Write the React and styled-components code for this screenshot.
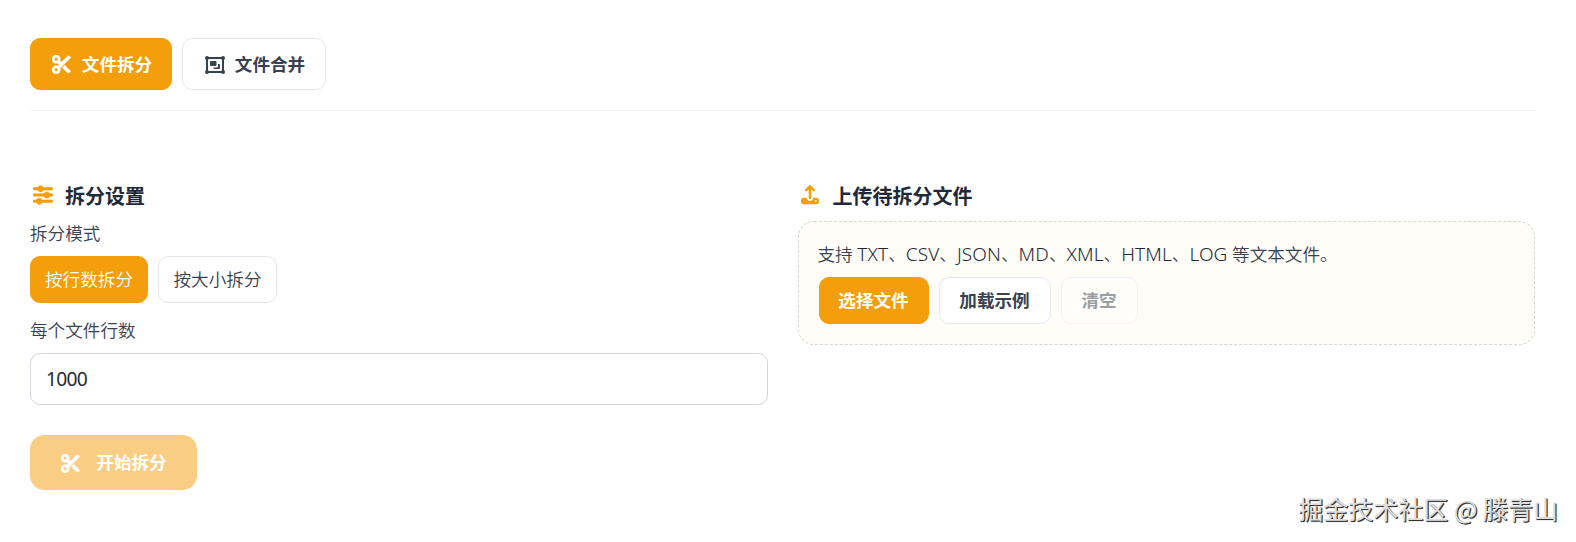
import React, { useState } from "react";
import styled, { createGlobalStyle } from "styled-components";
import { FaScissors } from "react-icons/fa6";

const GlobalStyle = createGlobalStyle`
  * {
    box-sizing: border-box;
  }

  body {
    margin: 0;
    background-color: #fff;
    color: #374151;
    font-family: "Noto Sans", "Noto Sans CJK SC", sans-serif;
    font-size: 17.6px;
  }

  button,
  input {
    font-family: inherit;
  }
`;

const Page = styled.main`
  position: relative;
  height: 542px;
  padding: 38px 41px 0 30px;
  overflow: hidden;
`;

const Tabs = styled.nav`
  display: flex;
  gap: 10px;
  height: 73px;
  border-bottom: 1px solid #f3f4f6;
`;

const Button = styled.button`
  display: inline-flex;
  align-items: center;
  justify-content: center;
  width: ${(props) => props.$width}px;
  height: ${(props) => props.$height || 47}px;
  padding: ${(props) => props.$top || 0}px 0 0 ${(props) => props.$top || 0}px;
  gap: ${(props) => props.$gap || 9}px;
  border: 1px solid ${(props) => (props.$active ? "#f59e0b" : "#e5e7eb")};
  border-radius: ${(props) => props.$radius || 10}px;
  background-color: ${(props) => (props.$active ? "#f59e0b" : "#fff")};
  color: ${(props) => (props.$active ? "#fff" : "#374151")};
  font-size: 17.6px;
  font-weight: ${(props) => props.$weight || 700};
  line-height: 1;
  white-space: nowrap;
  cursor: pointer;

  &:disabled {
    opacity: 0.5;
    cursor: not-allowed;
  }
`;

const IconBox = styled.span`
  display: inline-flex;
  justify-content: center;
  width: 1.25em;
  flex-shrink: 0;
`;

const ScissorsIcon = styled(FaScissors)`
  width: 19px;
  height: 19px;
  stroke: currentColor;
  stroke-width: 14px;
  flex-shrink: 0;
`;

const Columns = styled.div`
  display: grid;
  grid-template-columns: 1fr 1fr;
  gap: 30px;
  margin-top: 69px;
`;

const Title = styled.h3`
  display: flex;
  align-items: center;
  gap: 10px;
  height: 30px;
  margin: 0;
  color: #1f2937;
  font-size: 20px;
  font-weight: 700;

  ${IconBox} {
    color: #f59e0b;
  }
`;

const Label = styled.label`
  display: block;
  height: 28px;
  margin: ${(props) => props.$margin};
  color: #374151;
  font-weight: 350;
  line-height: 28px;
`;

const ButtonRow = styled.div`
  display: flex;
  gap: 10px;
`;

const Input = styled.input`
  display: block;
  width: 100%;
  height: 52px;
  margin-bottom: 30px;
  padding: 0 15px 2px;
  border: 1px solid #d1d5db;
  border-radius: 10px;
  outline: none;
  color: #1f2937;
  font-size: 19.2px;
  letter-spacing: -0.7px;
`;

const UploadBox = styled.div`
  height: 124px;
  margin-top: 11px;
  padding: 18px 20px;
  border: 1px dashed #d6d9d2;
  border-radius: 16px;
  background-color: #fffdf8;
`;

const Hint = styled.p`
  height: 28px;
  margin: 0 0 9px -1px;
  color: #374151;
  font-weight: 350;
  line-height: 28px;
  white-space: nowrap;
`;

const Format = styled.span`
  font-size: 19px;
  font-weight: 300;
  color: #1f2937;
  letter-spacing: 0.1px;
`;

const Watermark = styled.div`
  position: absolute;
  right: 18px;
  bottom: 16px;
  color: #dedede;
  font-family: "Noto Sans CJK SC", sans-serif;
  font-size: 25px;
  line-height: 36px;
  text-shadow: 1px 1px 0 #333, 1px 1px 1px #555;
  white-space: nowrap;
`;

const SlidersIcon = () => (
  <svg width="1em" height="1em" viewBox="0 0 512 512" fill="currentColor" stroke="currentColor" strokeWidth="14">
    <path d="M32 64C14.300 64 0 78.300 0 96s14.300 32 32 32h86.700c12.300 28.300 40.500 48 73.300 48s61-19.700 73.300-48H480c17.700 0 32-14.300 32-32s-14.300-32-32-32H265.300C253 35.700 224.800 16 192 16s-61 19.700-73.300 48zM32 224c-17.700 0-32 14.300-32 32s14.300 32 32 32h246.700c12.300 28.300 40.500 48 73.300 48s61-19.700 73.300-48H480c17.700 0 32-14.300 32-32s-14.300-32-32-32h-54.700c-12.300-28.300-40.500-48-73.300-48s-61 19.700-73.300 48zM32 384c-17.700 0-32 14.300-32 32s14.300 32 32 32h54.700c12.300 28.300 40.500 48 73.300 48s61-19.700 73.300-48H480c17.700 0 32-14.300 32-32s-14.300-32-32-32H233.300c-12.300-28.300-40.500-48-73.300-48s-61 19.700-73.300 48z" />
  </svg>
);

const UploadIcon = () => (
  <svg width="0.9em" height="1.03em" viewBox="0 0 448 512" fill="currentColor">
    <path d="M256 109.300V320c0 17.700-14.300 32-32 32s-32-14.300-32-32V109.300l-41.400 41.400c-12.500 12.500-32.800 12.500-45.300 0s-12.500-32.800 0-45.300l96-96c12.500-12.500 32.800-12.500 45.300 0l96 96c12.500 12.500 12.500 32.800 0 45.300s-32.800 12.500-45.300 0zM224 400c44.200 0 80-35.800 80-80h80c35.300 0 64 28.700 64 64v32c0 35.300-28.700 64-64 64H64c-35.300 0-64-28.700-64-64v-32c0-35.300 28.700-64 64-64h80c0 44.200 35.800 80 80 80zm144 24a24 24 0 1 0 0-48 24 24 0 1 0 0 48z" />
  </svg>
);

const GroupIcon = () => (
  <svg width="20" height="18" viewBox="0 0 20 18" fill="currentColor">
    <rect x="2" y="2" width="16" height="14" fill="none" stroke="currentColor" strokeWidth="2" />
    <circle cx="2" cy="2" r="2" />
    <circle cx="18" cy="2" r="2" />
    <circle cx="2" cy="16" r="2" />
    <circle cx="18" cy="16" r="2" />
    <rect x="5" y="5" width="6.500" height="5" rx="1" />
    <path d="M13 8h1a1 1 0 0 1 1 1v3a1 1 0 0 1-1 1H9.500a1 1 0 0 1-1-1v-.500H12a1 1 0 0 0 1-1z" />
  </svg>
);

const formats = ["TXT", "CSV", "JSON", "MD", "XML", "HTML", "LOG"];

const App = () => {
  const [tab, setTab] = useState("split");
  const [mode, setMode] = useState("lines");
  const [lines, setLines] = useState("1000");

  return (
    <>
      <GlobalStyle />
      <Page>
        <Tabs>
          <Button
            $width={142}
            $height={52}
            $top={1}
            $active={tab === "split"}
            onClick={() => setTab("split")}
          >
            <IconBox>
              <ScissorsIcon />
            </IconBox>
            文件拆分
          </Button>
          <Button
            $width={144}
            $height={52}
            $top={1}
            $active={tab === "merge"}
            onClick={() => setTab("merge")}
          >
            <IconBox>
              <GroupIcon />
            </IconBox>
            文件合并
          </Button>
        </Tabs>

        <Columns>
          <section>
            <Title>
              <IconBox>
                <SlidersIcon />
              </IconBox>
              拆分设置
            </Title>
            <Label as="div" $margin="9px 0 9px">
              拆分模式
            </Label>
            <ButtonRow>
              <Button
                $width={118}
                $weight={350}
                $active={mode === "lines"}
                onClick={() => setMode("lines")}
              >
                按行数拆分
              </Button>
              <Button
                $width={119}
                $weight={350}
                $active={mode === "size"}
                onClick={() => setMode("size")}
              >
                按大小拆分
              </Button>
            </ButtonRow>
            <Label htmlFor="lines" $margin="13px 0 9px">
              每个文件行数
            </Label>
            <Input
              id="lines"
              name="lines"
              value={lines}
              onChange={(e) => setLines(e.target.value)}
            />
            <Button $width={167} $height={55} $top={1} $radius={14} $gap={16} $active disabled>
              <ScissorsIcon />
              开始拆分
            </Button>
          </section>

          <section>
            <Title>
              <IconBox>
                <UploadIcon />
              </IconBox>
              上传待拆分文件
            </Title>
            <UploadBox>
              <Hint>
                支持{" "}
                {formats.map((format, index) => (
                  <React.Fragment key={format}>
                    {index > 0 && "、"}
                    <Format>{format}</Format>
                  </React.Fragment>
                ))}{" "}
                等文本文件。
              </Hint>
              <ButtonRow>
                <Button $width={110} $active>
                  选择文件
                </Button>
                <Button $width={112}>加载示例</Button>
                <Button $width={77} disabled>
                  清空
                </Button>
              </ButtonRow>
            </UploadBox>
          </section>
        </Columns>

        <Watermark>掘金技术社区 @ 滕青山</Watermark>
      </Page>
    </>
  );
};

export default App;
